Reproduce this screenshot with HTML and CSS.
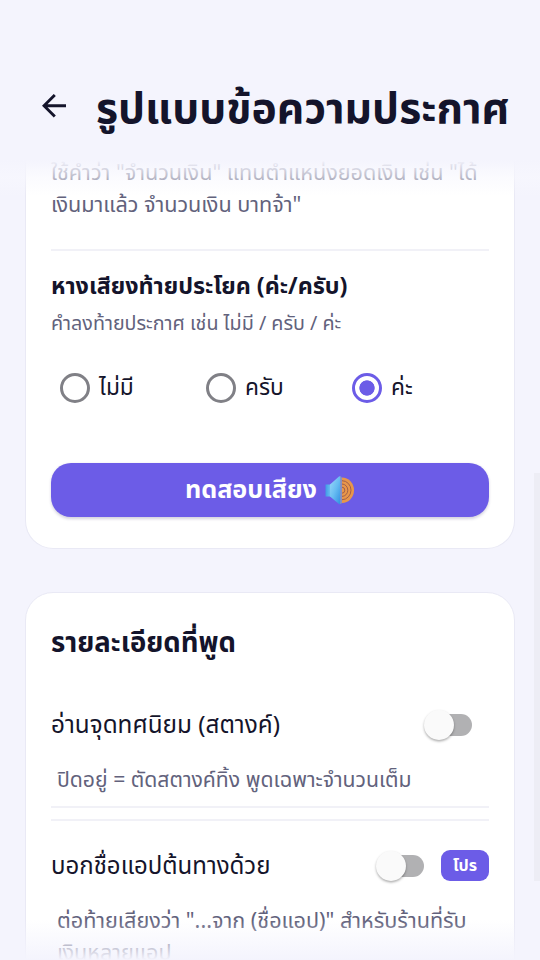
FILE: index.html
```html
<!DOCTYPE html>
<html lang="th">
<head>
<meta charset="utf-8">
<title>รูปแบบข้อความประกาศ</title>
<link rel="stylesheet" href="styles.css">
</head>
<body>
<header class="header">
  <svg class="back" viewBox="0 0 24 24" width="24" height="24"><path d="M24 11.7H2M12.8 1 2 11.7 12.8 22.6" fill="none" stroke="#14142b" stroke-width="2.9"/></svg>
  <h1 class="title">รูปแบบข้อความประกาศ</h1>
</header>
<main class="scroll">
  <section class="card card-first">
    <p class="note">ใช้คำว่า "จำนวนเงิน" แทนตำแหน่งยอดเงิน เช่น "ได้<br>เงินมาแล้ว จำนวนเงิน บาทจ้า"</p>
    <hr class="rule rule-first">
    <h3 class="subhead">หางเสียงท้ายประโยค (ค่ะ/ครับ)</h3>
    <p class="note note-small">คำลงท้ายประกาศ เช่น ไม่มี / ครับ / ค่ะ</p>
    <div class="radios">
      <label class="radio"><span class="dot"></span>ไม่มี</label>
      <label class="radio"><span class="dot"></span>ครับ</label>
      <label class="radio"><span class="dot dot-on"></span>ค่ะ</label>
    </div>
    <button class="test"><span>ทดสอบเสียง</span>
      <svg class="speaker" viewBox="0 0 30 30" width="30" height="30">
        <defs>
          <linearGradient id="cone" x1="0" y1="0" x2="1" y2="1"><stop offset="0" stop-color="#9bd8f8"/><stop offset=".5" stop-color="#68bdf2"/><stop offset="1" stop-color="#2f8fe0"/></linearGradient>
          <linearGradient id="box" x1="0" y1="0" x2="1" y2="0"><stop offset="0" stop-color="#3f9be5"/><stop offset="1" stop-color="#71c3f4"/></linearGradient>
        </defs>
        <path d="M17 2.500a12 12.700 0 0 1 0 25.400z" fill="#e8964a"/>
        <g fill="none" stroke="#a05f4c" stroke-width="1"><path d="M17 5.700a9 9.500 0 0 1 0 19M17 9a5.800 6.200 0 0 1 0 12.400M17 12.200a2.800 3 0 0 1 0 6"/></g>
        <path d="M.5 9.500H6v12H.5z" fill="url(#box)"/>
        <path d="M5 9.500 14 1.600q1-.8 1.500 0v27.300q-.6.7-1.500 0L5 21.500z" fill="url(#cone)"/>
        <path d="M15.300 1.200q1.500.4 1.500 2v24q0 1.600-1.500 2z" fill="#8f9cb9"/>
      </svg>
    </button>
  </section>
  <section class="card card-second">
    <h2 class="heading">รายละเอียดที่พูด</h2>
    <div class="row row-decimal"><span class="label">อ่านจุดทศนิยม (สตางค์)</span><span class="switch"></span></div>
    <p class="note note-inset note-decimal">ปิดอยู่ = ตัดสตางค์ทิ้ง พูดเฉพาะจำนวนเต็ม</p>
    <hr class="rule"><hr class="rule rule-second">
    <div class="row row-source"><span class="label label-source">บอกชื่อแอปต้นทางด้วย</span><span class="switch"></span><span class="badge">โปร</span></div>
    <p class="note note-inset">ต่อท้ายเสียงว่า "...จาก (ชื่อแอป)" สำหรับร้านที่รับ<br>เงินหลายแอป</p>
  </section>
  <div class="fade fade-top"></div>
  <div class="fade fade-bottom"></div>
  <div class="scrollbar"></div>
</main>
</body>
</html>
```
FILE: styles.css
```css
* { box-sizing: border-box; }
body {
  margin: 0;
  width: 540px;
  height: 960px;
  overflow: hidden;
  background: #f4f4fd;
  color: #14142b;
  font-family: "Noto Sans Thai", "Noto Sans", sans-serif;
}
h1, h2, h3, p { margin: 0; white-space: nowrap; }
.header { height: 154px; padding: 58px 0 0 42px; display: flex; align-items: center; }
.back { flex: none; margin-right: 30px; }
.title { font-size: 42.6px; font-weight: 700; line-height: 62px; padding-top: 7px; }
.scroll { position: relative; height: 806px; overflow: hidden; padding: 0 25px; }
.card { background: #fff; border: 1.5px solid #e9e9f5; padding: 0 25px; }
.card-first { height: 395px; border-top: 0; border-radius: 0 0 28px 28px; padding-top: 4px; }
.card-second { height: 440px; margin-top: 43px; border-radius: 28px 28px 0 0; padding-top: 30px; }
.note { font-size: 21.6px; line-height: 32px; color: #62627c; font-weight: 400; }
.rule { border: 0; height: 2px; margin: 0; background: #f1f1f7; }
.rule-first { margin-top: 27px; }
.subhead { margin-top: 20px; font-size: 23.3px; line-height: 32px; font-weight: 700; }
.note-small { margin-top: 5px; font-size: 19.7px; }
.radios { display: grid; grid-template-columns: 146px 146px 1fr; padding-left: 9px; margin-top: 31px; height: 33px; align-items: center; }
.radio { display: flex; align-items: center; gap: 9px; font-size: 22.7px; line-height: 32px; }
.dot { width: 30px; height: 30px; border: 3px solid #808086; border-radius: 50%; }
.dot-on { border-color: #6c5ce7; background: radial-gradient(circle, #6c5ce7 7.3px, transparent 8px); }
.test {
  display: flex; align-items: center; justify-content: center; gap: 8px;
  width: 100%; height: 54px; margin-top: 58.6px; padding: 0; border: 0; border-radius: 20px;
  background: #6c5ce7; color: #fff; font: 700 25.2px/36px "Noto Sans Thai", "Noto Sans", sans-serif;
  box-shadow: 0 1.5px 3px rgba(40, 35, 90, .2);
}
.test span { padding-top: 1px; }
.speaker { flex: none; }
.heading { font-size: 27.5px; line-height: 42px; font-weight: 700; }
.row { display: flex; align-items: center; height: 40px; }
.row-decimal { margin-top: 39.5px; }
.row-source { margin-top: 25px; }
.label { flex: 1; font-size: 24.3px; line-height: 40px; padding-top: 3px; white-space: nowrap; }
.label-source { font-size: 24px; }
.switch { position: relative; width: 48px; height: 22px; flex: none; background: linear-gradient(90deg, transparent 16px, #b1b1b3 16px); border-radius: 11px; margin-right: 17px; }
.switch::before { content: ""; position: absolute; left: 0; top: -4px; width: 30px; height: 30px; border-radius: 50%; background: #fafafa; box-shadow: 0 1.5px 2.5px rgba(0, 0, 0, .32); }
.note-inset { margin: 20px 0 9px 6px; }
.note-decimal { font-size: 21.2px; }
.rule-second { margin-top: 11px; }
.badge { width: 48px; height: 31px; border-radius: 9px; background: #6c5ce7; color: #fff; font-size: 16px; line-height: 32px; font-weight: 700; text-align: center; }
.fade { position: absolute; left: 0; right: 0; pointer-events: none; }
.fade-top { top: 0; height: 42px; background: linear-gradient(#f4f4fd 14%, rgba(248, 248, 254, .6) 55%, rgba(255, 255, 255, 0)); }
.fade-bottom { bottom: 0; height: 40px; background: linear-gradient(rgba(244, 244, 253, 0), #f4f4fd); }
.scrollbar { position: absolute; right: 0; top: 319px; width: 6px; height: 408px; background: #ededf5; }
```
